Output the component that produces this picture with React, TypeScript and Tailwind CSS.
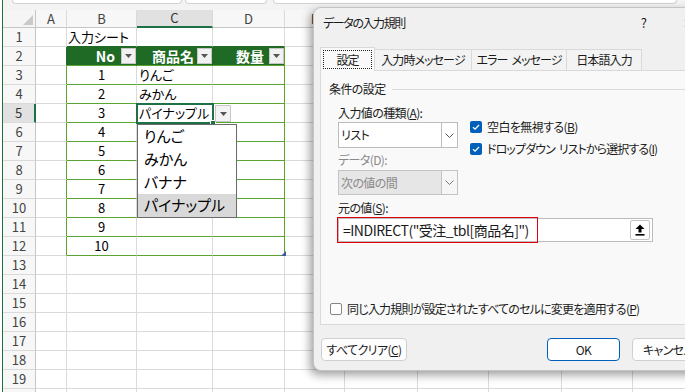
import React from 'react';

const cols = [
  { k: 'A', w: 'w-[31px]' },
  { k: 'B', w: 'w-[70px]' },
  { k: 'C', w: 'w-[76px]' },
  { k: 'D', w: 'w-[72px]' },
  { k: 'E', w: 'w-[60px]' },
  { k: 'F', w: 'w-[73px]' },
  { k: 'G', w: 'w-[71px]' },
  { k: 'H', w: 'w-[73px]' },
  { k: 'I', w: 'w-[71px]' },
  { k: 'J', w: 'w-[72px]' },
];

const rows = Array.from({ length: 20 }, (_, i) => i + 1);
const cText: Record<number, string> = { 3: 'りんご', 4: 'みかん', 5: 'パイナップル' };

function Tri({ cls = 'fill-[#555]' }: { cls?: string }) {
  return (
    <svg width="7" height="4" viewBox="0 0 7 4" className={cls}>
      <path d="M0 0 H7 L3.5 4 Z" />
    </svg>
  );
}

function FilterBtn() {
  return (
    <div className="w-[15px] h-[16px] bg-[#f1f1f1] border border-[#c6c6c6] flex items-center justify-center shrink-0">
      <Tri />
    </div>
  );
}

function Cell({ r, c }: { r: number; c: number }) {
  const col = cols[c];
  const inTable = r >= 2 && r <= 12 && c >= 1 && c <= 3;
  const isHeader = r === 2 && inTable;
  let b = 'border-b-[#dadada]';
  if (inTable) b = 'border-b-[#5aa532]';
  if (r === 1 && c >= 1 && c <= 3) b = 'border-b-[#1f6b26]';
  let rc = 'border-r-[#dadada]';
  if (r >= 3 && r <= 12 && (c === 0 || c === 3)) rc = 'border-r-[#5aa532]';
  if (r === 2 && c === 0) rc = 'border-r-[#1f6b26]';
  if (isHeader && c < 3) rc = 'border-r-[#1f6b26]';
  if (isHeader && c === 3) rc = 'border-r-[#5aa532]';
  const bg = isHeader ? 'bg-[#1f6b26]' : 'bg-white';

  let content: React.ReactNode = null;
  if (r === 1 && c === 1) content = <span className="pl-[1px] text-[13px]">入力シート</span>;
  if (isHeader) {
    const label = c === 1 ? 'No' : c === 2 ? '商品名' : '数量';
    content = (
      <div className="flex-1 flex items-center justify-end gap-[3px] text-white font-bold text-[14px]">
        <span className={c === 1 ? 'mr-[3px]' : c === 3 ? 'mr-[2px]' : ''}>{label}</span>
        <FilterBtn />
      </div>
    );
  }
  if (inTable && r >= 3 && c === 1) content = <span className="flex-1 text-center text-[13px]">{r - 2}</span>;
  if (c === 2 && cText[r]) content = <span className="pl-[2px] text-[13px]">{cText[r]}</span>;

  return (
    <div className={`${col.w} h-[19px] shrink-0 border-r border-b ${rc} ${b} ${bg} flex items-center overflow-visible whitespace-nowrap`}>
      {content}
    </div>
  );
}

function TopStrip() {
  return (
    <div className="h-[10px] bg-[#f3f3f3] flex items-start">
      <div className="ml-[9px] w-[170px] h-[4px] bg-white border border-t-0 border-[#d2d2d2] rounded-b-[4px]" />
      <div className="ml-[3px] w-[82px] h-[4px] bg-white border border-t-0 border-[#d2d2d2] rounded-b-[4px]" />
      <div className="ml-[6px] w-[404px] h-[4px] bg-white border border-t-0 border-[#d2d2d2] rounded-b-[4px]" />
    </div>
  );
}

function HeaderRow() {
  return (
    <div className="flex h-[18px]">
      <div className="w-[33px] shrink-0 bg-[#f5f5f5] border-r border-b border-[#c6c6c6] relative">
        <svg width="10" height="10" viewBox="0 0 10 10" className="absolute right-[2px] bottom-[2px] fill-[#c9c9c9]">
          <path d="M10 0 V10 H0 Z" />
        </svg>
      </div>
      {cols.map((col) => (
        <div
          key={col.k}
          className={`${col.w} shrink-0 border-r border-r-[#dadada] flex items-center justify-center text-[13px] ${
            col.k === 'C' ? 'bg-[#e1e1e1] border-b-2 border-b-[#1e7145] text-[#333]' : 'bg-[#f7f7f7] border-b border-b-[#c6c6c6] text-[#444]'
          }`}
        >
          {col.k}
        </div>
      ))}
    </div>
  );
}

function Sheet() {
  return (
    <div className="flex flex-col">
      <TopStrip />
      <HeaderRow />
      {rows.map((r) => (
        <div key={r} className="flex">
          <div
            className={`w-[33px] h-[19px] shrink-0 border-b border-b-[#dadada] flex items-center justify-center text-[13px] ${
              r === 5 ? 'bg-[#e1e1e1] border-r-2 border-r-[#1e7145] text-[#333]' : 'bg-[#f7f7f7] border-r border-r-[#c6c6c6] text-[#444]'
            }`}
          >
            {r}
          </div>
          {cols.map((_, c) => (
            <Cell key={c} r={r} c={c} />
          ))}
        </div>
      ))}
    </div>
  );
}

function Chevron({ cls = 'stroke-[#555]' }: { cls?: string }) {
  return (
    <svg width="9" height="5" viewBox="0 0 9 5" className={cls} fill="none">
      <path d="M0.5 0.5 L4.5 4.5 L8.5 0.5" strokeWidth="1" />
    </svg>
  );
}

function CheckOn() {
  return (
    <div className="w-[12px] h-[12px] rounded-[2px] bg-[#005fb8] flex items-center justify-center shrink-0">
      <svg width="10" height="10" viewBox="0 0 10 10" fill="none" className="stroke-white">
        <path d="M2 5.2 L4.1 7.2 L8 3" strokeWidth="1.3" />
      </svg>
    </div>
  );
}

function Dialog() {
  return (
    <div className="absolute left-[313px] top-[7px] w-[410px] h-[364px] rounded-[8px] bg-[#f0f0f0] border border-[#c4c4c4] shadow-[-3px_4px_10px_rgba(0,0,0,0.38)] flex flex-col text-[12px] tracking-[-0.6px] text-[#1b1b1b] whitespace-nowrap">
      <div className="h-[30px] flex items-center shrink-0">
        <div className="flex-1 pl-[9px] tracking-[-1.4px]">データの入力規則</div>
        <div className="w-[45px] text-center text-[13px]">?</div>
        <div className="w-[45px] text-center text-[13px]">✕</div>
        <div className="w-[11px]" />
      </div>
      <div className="mt-[9px] pl-[6px] flex items-end h-[23px] shrink-0 relative z-10 tracking-[-0.9px]">
        <div className="w-[55px] h-[24px] -mb-px bg-[#f9f9f9] border border-b-0 border-[#d9d9d9] flex items-center justify-center">
          <span className="border border-dotted border-[#222] w-[49px] h-[19px] flex items-center justify-center">設定</span>
        </div>
        <div className="w-[97px] h-[21px] bg-[#f3f3f3] border-t border-r border-[#d9d9d9] flex items-center justify-center">入力時メッセージ</div>
        <div className="w-[95px] h-[21px] bg-[#f3f3f3] border-t border-r border-[#d9d9d9] flex items-center justify-center">
          <span>エラー</span>
          <span className="ml-[4px]">メッセージ</span>
        </div>
        <div className="w-[75px] h-[21px] bg-[#f3f3f3] border-t border-r border-[#d9d9d9] flex items-center justify-center">日本語入力</div>
      </div>
      <div className="ml-[6px] mr-[6px] h-[255px] shrink-0 bg-[#f9f9f9] border border-[#d9d9d9] flex flex-col">
        <div className="mt-[9px] h-[18px] flex items-center pl-[8px] gap-[6px]">
          <span>条件の設定</span>
          <div className="flex-1 h-px bg-[#dcdcdc]" />
        </div>
        <div className="pl-[17px] flex items-start">
          <div className="w-[120px] flex flex-col">
            <div className="mt-[6px] h-[18px] flex items-center">
              入力値の種類(<u>A</u>):
            </div>
            <div className="h-[26px] bg-white border border-[#bcbcbc] flex">
              <div className="flex-1 flex items-center pl-[2px]">リスト</div>
              <div className="w-[16px] border-l border-[#bcbcbc] flex items-center justify-center">
                <Chevron />
              </div>
            </div>
            <div className="mt-[3px] h-[18px] flex items-center text-[#8a8a8a]">データ(D):</div>
            <div className="mt-[1px] h-[25px] bg-[#e6e6e6] border border-[#c4c4c4] flex">
              <div className="flex-1 flex items-center pl-[2px] text-[#8a8a8a]">次の値の間</div>
              <div className="w-[16px] bg-[#f6f6f6] border-l border-[#c4c4c4] flex items-center justify-center">
                <Chevron cls="stroke-[#777]" />
              </div>
            </div>
          </div>
          <div className="ml-[12px] mt-[18px] flex flex-col">
            <div className="h-[22px] flex items-center gap-[5px]">
              <CheckOn />
              <span>空白を無視する(<u>B</u>)</span>
            </div>
            <div className="h-[22px] flex items-center gap-[5px] tracking-[-0.9px]">
              <CheckOn />
              <span>
                ドロップダウン<span className="ml-[4px]">リストから選択する(<u>I</u>)</span>
              </span>
            </div>
          </div>
        </div>
        <div className="pl-[17px] mt-[4px] h-[18px] flex items-center">
          元の値(<u>S</u>):
        </div>
        <div className="ml-[17px] mt-[1px] w-[315px] h-[24px] bg-white border border-[#bcbcbc] flex items-center relative">
          <span className="pl-[4px] text-[14px] tracking-[-0.5px] flex-1">=INDIRECT("受注_tbl[商品名]")</span>
          <div className="w-[20px] h-[20px] mr-[2px] border border-[#c4c4c4] rounded-[2px] bg-white flex items-center justify-center">
            <svg width="10" height="12" viewBox="0 0 10 12" className="fill-black">
              <path d="M5 0.5 L9.5 5 H6.5 V8.5 H3.5 V5 H0.5 Z" />
              <rect x="0.5" y="10" width="9" height="1.6" />
            </svg>
          </div>
          <div className="absolute left-[-2px] top-[-2px] w-[201px] h-[26px] border border-[#e3000f]" />
        </div>
        <div className="mt-auto mb-[6px] pl-[9px] h-[18px] flex items-center gap-[5px] tracking-[-0.8px]">
          <div className="w-[12px] h-[12px] rounded-[2px] border border-[#858585] bg-white shrink-0" />
          <span>同じ入力規則が設定されたすべてのセルに変更を適用する(<u>P</u>)</span>
        </div>
      </div>
      <div className="mt-[13px] pl-[7px] flex h-[23px]">
        <div className="w-[86px] rounded-[4px] bg-[#fdfdfd] border border-[#d0d0d0] flex items-center justify-center">
          すべてクリア(<u>C</u>)
        </div>
        <div className="ml-[140px] w-[73px] rounded-[4px] bg-white border border-[#005fb8] flex items-center justify-center">OK</div>
        <div className="ml-[12px] w-[73px] rounded-[4px] bg-[#fdfdfd] border border-[#d0d0d0] flex items-center justify-center">キャンセル</div>
      </div>
    </div>
  );
}

export default function App() {
  return (
    <div className="relative w-[685px] h-[392px] overflow-hidden bg-white font-['Noto_Sans_CJK_JP',sans-serif] [font-feature-settings:'palt'] text-black">
      <div className="flex">
        <div className="w-[3px] shrink-0 border-r border-r-[#1e7145] bg-white" />
        <Sheet />
      </div>

      <div className="absolute left-[136px] top-[103px] w-[78px] h-[21px] border-2 border-[#1e7145]" />
      <div className="absolute left-[210px] top-[120px] w-[6px] h-[6px] bg-[#1e7145] border border-white" />
      <div className="absolute left-[215px] top-[105px] w-[16px] h-[17px] bg-[#f3f3f3] border border-[#c8c8c8] flex items-center justify-center">
        <Tri />
      </div>
      <svg width="5" height="5" viewBox="0 0 5 5" className="absolute left-[281px] top-[251px] fill-[#3b5ba5]">
        <path d="M5 0 V5 H0 Z" />
      </svg>
      <div className="absolute left-[137px] top-[124px] w-[100px] h-[94px] border border-[#6b6b6b] bg-white flex flex-col text-[15px]">
        <div className="flex-1 flex items-center pl-[6px]">りんご</div>
        <div className="flex-1 flex items-center pl-[6px]">みかん</div>
        <div className="flex-1 flex items-center pl-[6px]">バナナ</div>
        <div className="flex-1 flex items-center pl-[6px] bg-[#d9d9d9]">パイナップル</div>
      </div>

      <Dialog />
    </div>
  );
}
